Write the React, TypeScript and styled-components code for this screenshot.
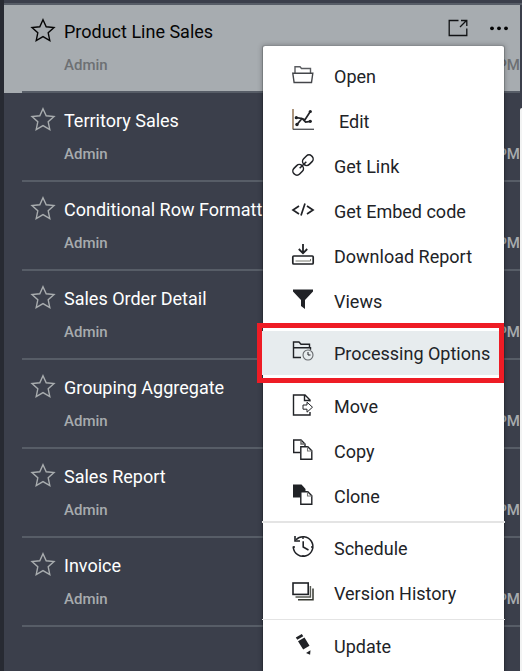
import React from 'react';
import styled, { createGlobalStyle } from 'styled-components';

const GlobalStyle = createGlobalStyle`
  body { margin: 0; background: #3b3f4b; font-family: Roboto, "Liberation Sans", sans-serif; }
  * { box-sizing: border-box; }
`;

const Page = styled.main`
  position: relative;
  width: 522px;
  height: 671px;
  overflow: hidden;
  display: grid;
  grid-template-columns: 4px 516px 2px;
  grid-template-rows: 5px 1fr;
  background: #3b3f4b;
`;
const Rail = styled.div`
  grid-row: 1 / 3;
  background: #272a32;
`;
const ListTop = styled.div`
  grid-column: 2 / 4;
  border-bottom: 2px solid #575d67;
`;
const PanelEdge = styled.div`
  margin-top: 103px;
  background: #f2f3f3;
  border-top-left-radius: 2px;
`;
const Row = styled.article<{ $active?: boolean }>`
  position: relative;
  height: ${p => (p.$active ? 88 : 89)}px;
  padding: ${p => (p.$active ? 12 : 13)}px 0 0 26px;
  display: grid;
  grid-template-columns: 34px 1fr;
  grid-template-rows: 30px 36px;
  background: ${p => (p.$active ? '#a7acb0' : 'transparent')};
  color: ${p => (p.$active ? '#050505' : '#fff')};
  &::after {
    content: '';
    position: absolute;
    left: 18px;
    right: 0;
    bottom: 0;
    height: 2px;
    background: #575d67;
  }
`;
const Star = styled.svg<{ $active?: boolean }>`
  width: 26px;
  height: 26px;
  fill: none;
  stroke: ${p => (p.$active ? '#050505' : '#a9adaf')};
  stroke-width: 1.4;
`;
const Title = styled.div`
  display: flex;
  justify-content: space-between;
  font-size: 18px;
  line-height: 30px;
  font-weight: 400;
  white-space: nowrap;
`;
const Actions = styled.div`
  display: flex;
  gap: 21px;
  padding: 1px 11px 0 0;
`;
const Meta = styled.div<{ $active?: boolean }>`
  grid-column: 2;
  display: flex;
  justify-content: space-between;
  font-size: 15px;
  line-height: 36px;
  font-weight: 500;
  color: ${p => (p.$active ? '#6d7073' : '#a7abae')};
`;
const Menu = styled.nav`
  position: absolute;
  left: 262px;
  top: 45px;
  width: 243px;
  height: 640px;
  padding-top: 8px;
  border: 1px solid #888c90;
  border-color: #888c90 rgba(0, 0, 0, 0.15);
  border-radius: 3px;
  background: #fff;
  background-clip: padding-box;
  box-shadow: 0 0 5px rgba(0, 0, 0, 0.25);
`;
const Item = styled.div<{ $selected?: boolean }>`
  height: ${p => (p.$selected ? 44 : 45)}px;
  margin: ${p => (p.$selected ? '7px 0 9px -1px' : '0')};
  padding-left: ${p => (p.$selected ? 30 : 29)}px;
  display: grid;
  grid-template-columns: 42px 1fr;
  align-items: center;
  background: ${p => (p.$selected ? '#e7ecee' : 'transparent')};
`;
const Label = styled.span<{ $inset?: boolean; $selected?: boolean }>`
  padding-left: ${p => (p.$inset ? 5 : 0)}px;
  padding-top: ${p => (p.$selected ? 2 : 0)}px;
  font-size: 18px;
  line-height: 24px;
  color: #212327;
  white-space: nowrap;
`;
const Separator = styled.div<{ $thin?: boolean }>`
  height: ${p => (p.$thin ? 1 : 2)}px;
  margin: ${p => (p.$thin ? '3px -1px 4px' : '2px -1px 3px')};
  background: #e4e4e4;
`;
const Highlight = styled.div`
  position: absolute;
  left: 257px;
  top: 323px;
  width: 247px;
  height: 60px;
  border: 5px solid #ee1c25;
`;
const Glyph = styled.svg`
  width: 22px;
  height: 24px;
  margin-top: -4px;
  overflow: visible;
  fill: none;
  stroke: #202226;
  stroke-width: 1.4;
`;
const ActionGlyph = styled.svg`
  width: 20px;
  height: 20px;
  fill: none;
  stroke: #101214;
  stroke-width: 1.3;
`;

const icons: Record<string, React.ReactNode> = {
  open: <><path stroke="#5a5c60" d="M3 10V3.7h5l1.5 1.8h9V10" /><path d="M.8 10.3h20l-1.3 9.2H2.1Z" stroke="#44464a" /></>,
  edit: <><path d="M1 1v20.5" stroke="#8a6a48" /><path d="M1 21.3h21" stroke="#55575b" /><path d="m5 16.5 5-6 3 1.2L18.3 3.5M4.3 9.7l5.7.8 3.6 3.5 4.7-.7" strokeWidth="1.7" /><g fill="#202226" stroke="none"><circle cx="5" cy="16.5" r="1.7" /><circle cx="4.3" cy="9.7" r="1.6" /><circle cx="18.3" cy="3.5" r="1.6" /><circle cx="18.3" cy="13.3" r="1.6" /></g></>,
  link: <g transform="rotate(-45 11 12)" strokeWidth="1.5"><rect x="-1.5" y="8" width="11.3" height="8" rx="3.7" /><rect x="12.2" y="8" width="11.3" height="8" rx="3.7" /><path d="M6.3 12h9.4" /></g>,
  code: <path d="m7 8-6 4 6 4m8-8 6 4-6 4M13 5.5l-4 12" strokeWidth="1.7" />,
  download: <><path d="M11 1v9M6.8 6l4.2 4.3L15.2 6" strokeWidth="1.8" /><rect x=".8" y="13" width="20.4" height="8" rx="1" strokeWidth="1.7" /><path d="M3.5 18h15v-2" stroke="#77796f" strokeWidth="1" /></>,
  views: <path d="M1 1.5h20v2L13 12v9l-4-3v-6L1 3.5Z" fill="#202226" stroke="none" />,
  processing: <><path d="M9 18.5H1.5V3H7L9 5.3h8.5V9M1.5 8.7h17v2" /><circle cx="16" cy="16" r="5" fill="#e7ecee" stroke="#66696d" strokeWidth="1.1" /><path d="M16 13v3h2.5" strokeWidth="1" /></>,
  move: <><path d="M18 8.5V7l-5-5H1.5v20H18v-3M12.5 2v5.5H18" /><path d="M11 12h4V9.2l5.5 5-5.5 5v-3h-4Z" fill="#fff" strokeWidth="1" /></>,
  copy: <><path d="M8 14.5H1.7V2H9l4 4v2" /><path d="M9 2v4h4" stroke="#666" /><path d="M8.8 8.7h7l4 4v8.5h-11Z" fill="#fff" /><path d="M15.5 8.7v4.3h4.5" stroke="#777" strokeWidth="1.1" /></>,
  clone: <><path d="M1 1.5h8.5L13.5 6v8.5H1Z" fill="#202226" stroke="none" /><path d="M8.8 8.7h7l4 4v8.5h-11Z" fill="#fff" /><path d="M15.5 8.7v4.3h4.5" stroke="#777" strokeWidth="1.1" /></>,
  schedule: <><path d="M4 4.7a9.8 9.8 0 1 1-2.7 7.5M1.2 11.5c0 .8.1 1.5.3 2.2" strokeWidth="1.5" /><path d="M3 1v5h5M11.2 6.2V12l5.3 3" strokeWidth="1.6" /><path d="M11 2v2M21 12h-2M11 22v-2M1 12h2" /></>,
  history: <><rect x="1" y="3" width="15.2" height="11.4" strokeWidth="1.6" /><path d="M18.4 6v11H3.5" stroke="#565953" strokeWidth="1.5" /><path d="M21 8.5v11.2H6" stroke="#34372f" strokeWidth="1.5" /></>,
  update: <g fill="#202226" stroke="none"><path d="m3.8 4.6 6-3.5 1.5 2.2-6 3.4ZM6 8.2l6.5-3.8 5 8.3-6.3 3.8ZM14 20l4.5-2.8-.4 4.5Z" /></g>,
};

const MenuItem = ({ icon, text, selected, inset }: { icon: string; text: string; selected?: boolean; inset?: boolean }) => (
  <Item $selected={selected}>
    <Glyph viewBox="0 0 22 24">{icons[icon]}</Glyph>
    <Label $inset={inset} $selected={selected}>{text}</Label>
  </Item>
);

const reports = ['Product Line Sales', 'Territory Sales', 'Conditional Row Formatt', 'Sales Order Detail', 'Grouping Aggregate', 'Sales Report', 'Invoice'];

export default function App() {
  return (
    <>
      <GlobalStyle />
      <Page>
        <Rail />
        <ListTop />
        <section>
          {reports.map((name, i) => (
            <Row key={name} $active={i === 0}>
              <Star $active={i === 0} viewBox="0 0 26 26"><path d="m13 2.7 3.2 7.1 7.8.8-5.8 5.2 1.6 7.7-6.8-3.9-6.8 3.9 1.6-7.7L2 10.6l7.8-.8Z" /></Star>
              <Title>
                <span>{name}</span>
                {i === 0 && (
                  <Actions>
                    <ActionGlyph viewBox="0 0 20 20"><path d="M10.5 2.5H1.2v15h17.6v-7M12 9l6.5-6.5M13 2.5h5.8V8" /></ActionGlyph>
                    <ActionGlyph viewBox="0 0 20 20"><g fill="#050505" stroke="none"><circle cx="3" cy="10.3" r="1.9" /><circle cx="10" cy="10.3" r="1.9" /><circle cx="17" cy="10.3" r="1.9" /></g></ActionGlyph>
                  </Actions>
                )}
              </Title>
              <Meta $active={i === 0}><span>Admin</span><span>PM</span></Meta>
            </Row>
          ))}
        </section>
        <PanelEdge />
        <Menu>
          <MenuItem icon="open" text="Open" />
          <MenuItem icon="edit" text="Edit" inset />
          <MenuItem icon="link" text="Get Link" />
          <MenuItem icon="code" text="Get Embed code" />
          <MenuItem icon="download" text="Download Report" />
          <MenuItem icon="views" text="Views" />
          <MenuItem icon="processing" text="Processing Options" selected />
          <MenuItem icon="move" text="Move" />
          <MenuItem icon="copy" text="Copy" />
          <MenuItem icon="clone" text="Clone" />
          <Separator />
          <MenuItem icon="schedule" text="Schedule" />
          <MenuItem icon="history" text="Version History" />
          <Separator $thin />
          <MenuItem icon="update" text="Update" />
        </Menu>
        <Highlight />
      </Page>
    </>
  );
}
